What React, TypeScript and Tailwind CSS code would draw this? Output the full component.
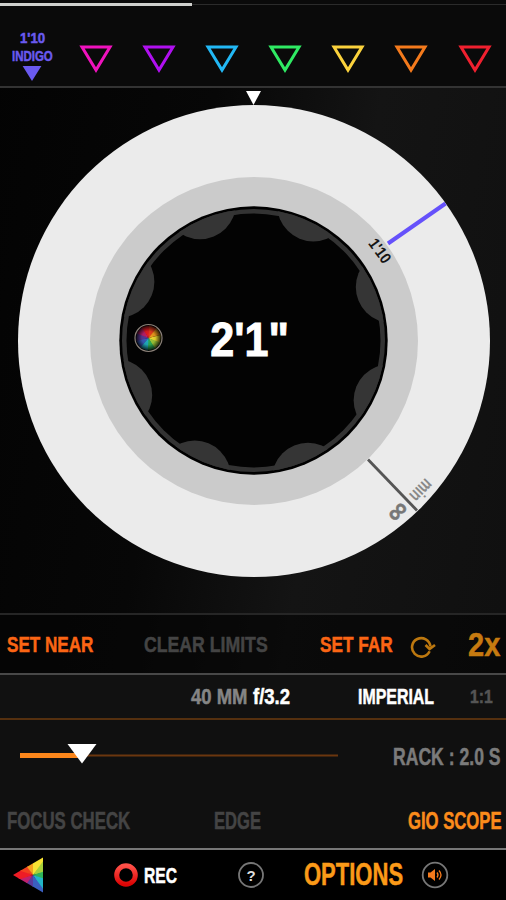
import type { ReactNode } from "react";

type LabelProps = {
    box: string;
    text: string;
    children: ReactNode;
};

const markers = ["#f012be", "#b010f0", "#22b8f5", "#2fea63", "#fbd23c", "#f47a1c", "#f0202f"];

const scallops = [23.6, 68.6, 113.6, 158.6, 203.6, 248.6, 293.6, 338.6];

const wheel = ["#f7e233", "#a5cf3a", "#2fb45a", "#22b5c8", "#3a5fc0", "#5a3a9c", "#c0206e", "#ee1c25", "#f2401f", "#f7a01f"];

function polar(cx: number, cy: number, r: number, deg: number): string {
    const a = (deg * Math.PI) / 180;
    return `${cx + r * Math.sin(a)} ${cy - r * Math.cos(a)}`;
}

// Condensed label: the box keeps the layout width, the text is squeezed into it.
function Label({ box, text, children }: LabelProps) {
    return (
        <span className={`block shrink-0 whitespace-nowrap ${box}`}>
            <span className={`inline-block origin-left font-bold [-webkit-text-stroke:0.5px] ${text}`}>{children}</span>
        </span>
    );
}

function ColorWheel({ cx, cy, r, turn = 0 }: { cx: number; cy: number; r: number; turn?: number }) {
    return (
        <>
            {wheel.map((color, i) => (
                <path
                    key={color}
                    d={`M${cx} ${cy}L${polar(cx, cy, r, turn + i * 36)}L${polar(cx, cy, r, turn + i * 36 + (i === 9 ? 36 : 42))}Z`}
                    fill={color}
                />
            ))}
        </>
    );
}

function MarkerBar() {
    return (
        <header className="h-[88px] border-b-2 border-[#333] bg-[#0a0a0a]">
            <div className="flex h-[29px] items-start pt-[3px]">
                <div className="h-[3px] w-[192px] bg-[#cfd0cd]" />
                <div className="mt-px h-px flex-1 bg-[#2b2b2b]" />
            </div>
            <div className="flex">
                <div className="flex w-[64px] shrink-0 flex-col items-start text-[#6a5af0]">
                    <Label box="ml-[20px] h-[18px] w-[28px] leading-[18px]" text="scale-x-[0.88] text-[15px]">1'10</Label>
                    <Label box="ml-[12px] h-[19px] w-[42px] leading-[18px]" text="scale-x-[0.74] text-[15.5px]">INDIGO</Label>
                    <svg className="ml-[22px] block" width="20" height="16">
                        <path d="M0 -1H20L10 15Z" fill="#6a5af0" />
                    </svg>
                </div>
                <div className="flex pt-[16px] pl-[14.5px]">
                    {markers.map((color) => (
                        <svg key={color} className="mr-[29.2px] block shrink-0" width="34" height="28">
                            <path d="M3 2H31L17 25Z" fill="none" stroke={color} strokeWidth="3" />
                        </svg>
                    ))}
                </div>
            </div>
        </header>
    );
}

function FocusDial() {
    return (
        <svg className="block" width="506" height="525" viewBox="0 88 506 525" fontFamily="Liberation Sans, Arial, sans-serif">
            <defs>
                <clipPath id="knob">
                    <circle cx="253.5" cy="340.5" r="131.5" />
                </clipPath>
                <radialGradient id="orb">
                    <stop offset="0" stopColor="#000" stopOpacity="0" />
                    <stop offset="0.5" stopColor="#000" stopOpacity="0.12" />
                    <stop offset="1" stopColor="#000" stopOpacity="0.95" />
                </radialGradient>
            </defs>
            <path d="M246 91H261L253.5 105Z" fill="#fff" />
            <circle cx="254" cy="341" r="236" fill="#ebebeb" />
            <circle cx="254" cy="341" r="164" fill="#cbcbcb" />
            <circle cx="253.5" cy="340.5" r="134.2" fill="#000" />
            <circle cx="253.5" cy="340.5" r="131.5" fill="#333" />
            <circle cx="253.5" cy="340.5" r="127" fill="#030303" />
            <g clipPath="url(#knob)" fill="#353535">
                {scallops.map((deg) => {
                    const [x, y] = polar(254, 341, 148, deg).split(" ");
                    return <circle key={deg} cx={x} cy={y} r="36" />;
                })}
            </g>
            <ColorWheel cx={148.5} cy={338} r={13} turn={75} />
            <circle cx="148.5" cy="338" r="13.5" fill="url(#orb)" stroke="#8b8078" strokeWidth="1.2" />
            <line x1="388" y1="243.5" x2="445.5" y2="203.5" stroke="#6551fb" strokeWidth="4" />
            <line x1="368" y1="459.5" x2="417" y2="510.5" stroke="#555" strokeWidth="2.8" />
            <text transform="translate(375.5 254) rotate(54) scale(.86 1)" textAnchor="middle" fontSize="16" fontWeight="bold" fill="#151515">1'10</text>
            <text transform="translate(417 486) rotate(135) scale(.72 1)" textAnchor="middle" fontSize="19" fontWeight="bold" fill="#888">min</text>
            <text transform="translate(403.5 517.5) rotate(-45)" textAnchor="middle" fontSize="28" fontWeight="bold" fill="#777" stroke="#777" strokeWidth=".5">∞</text>
            <text transform="translate(249.5 356) scale(.88 1)" textAnchor="middle" fontSize="49" fontWeight="bold" fill="#fff" stroke="#fff" strokeWidth="1">2'1"</text>
        </svg>
    );
}

function LimitsRow() {
    return (
        <div className="flex h-[60px] items-center border-t-2 border-[#262626] bg-[#060606]/70 pl-[6.5px] text-[22.8px] text-[#fb6514]">
            <Label box="w-[137px]" text="scale-x-[0.75]">SET NEAR</Label>
            <Label box="w-[176px] text-[#444]" text="scale-x-[0.775]">CLEAR LIMITS</Label>
            <Label box="w-[90px]" text="scale-x-[0.755]">SET FAR</Label>
            <svg className="mt-[5px] block shrink-0" width="28" height="26" fill="none" stroke="#bd780f" strokeWidth="2.6">
                <path d="M19.6 17.2A9.2 9.2 0 1 1 20.4 12.5M15.5 11L19.6 15L25 11" />
            </svg>
            <Label box="ml-[30px] pt-[2px] text-[33px] text-[#c67a10]" text="scale-x-[0.88]">2x</Label>
        </div>
    );
}

function LensRow() {
    return (
        <div className="flex h-[47px] items-center border-t-2 border-b-2 border-t-[#484848] border-b-[#55300f] bg-[#111] pt-px pl-[190.5px] text-[21.5px] text-white">
            <Label box="w-[62px] text-[#858585]" text="scale-x-[0.86]">40 MM</Label>
            <Label box="w-[105.5px]" text="scale-x-[0.86]">f/3.2</Label>
            <Label box="w-[112px]" text="scale-x-[0.74]">IMPERIAL</Label>
            <Label box="text-[18.5px] text-[#555]" text="scale-x-[0.85]">1:1</Label>
        </div>
    );
}

function RackPanel() {
    return (
        <div className="h-[130px] border-b-2 border-[#777] bg-[#101010] text-[23px]">
            <div className="flex h-[76px] items-center pl-[20px]">
                <svg className="mb-[6px] block shrink-0" width="318" height="24">
                    <path d="M0 12.5H318" stroke="#6b360e" strokeWidth="2" />
                    <path d="M0 12.5H62" stroke="#fb861b" strokeWidth="5" />
                    <path d="M47.5 1H76.5L62 20.5Z" fill="#fff" />
                </svg>
                <Label box="mb-[2px] ml-[55px] text-[#7b7b7b]" text="scale-x-[0.765]">RACK : 2.0 S</Label>
            </div>
            <div className="flex h-[51px] items-center pl-[6.5px] text-[#444]">
                <Label box="w-[207px]" text="scale-x-[0.73]">FOCUS CHECK</Label>
                <Label box="w-[194px]" text="scale-x-[0.72]">EDGE</Label>
                <Label box="text-[#fb8b1b]" text="scale-x-[0.725]">GIO SCOPE</Label>
            </div>
        </div>
    );
}

function BottomBar() {
    return (
        <footer className="flex h-[50px] items-center bg-black pl-[13px]">
            <svg className="block shrink-0" width="30" height="36" viewBox="13 857 30 36">
                <defs>
                    <clipPath id="logo">
                        <path d="M13 875L43 857.5V892.5Z" />
                    </clipPath>
                </defs>
                <g clipPath="url(#logo)">
                    <ColorWheel cx={33} cy={875} r={30} />
                </g>
            </svg>
            <svg className="ml-[70px] block shrink-0" width="26" height="26">
                <defs>
                    <linearGradient id="rec" x1="0" y1="0" x2="0" y2="1">
                        <stop offset="0" stopColor="#ff5048" />
                        <stop offset="1" stopColor="#dc0505" />
                    </linearGradient>
                </defs>
                <circle cx="13" cy="13" r="9.3" fill="none" stroke="url(#rec)" strokeWidth="5" />
            </svg>
            <Label box="ml-[4.5px] w-[93px] text-[22px] text-white" text="scale-x-[0.71]">REC</Label>
            <svg className="block shrink-0" width="28" height="28" fontFamily="Liberation Sans, Arial, sans-serif">
                <circle cx="14" cy="14" r="12" fill="none" stroke="#777" strokeWidth="1.8" />
                <text x="14" y="19.5" textAnchor="middle" fontSize="15" fontWeight="bold" fill="#ddd">?</text>
            </svg>
            <Label box="ml-[39px] w-[117.5px] text-[31px] text-[#fb9a18]" text="scale-x-[0.71]">OPTIONS</Label>
            <svg className="block shrink-0" width="28" height="28">
                <circle cx="14" cy="14" r="12.3" fill="none" stroke="#777" strokeWidth="1.8" />
                <path d="M7 11.5H9.5L14 8V20L9.5 16.5H7Z" fill="#f47a1c" />
                <path d="M16 11.5Q18 14 16 16.5M18 9.5Q22 14 18 18.5" fill="none" stroke="#f47a1c" strokeWidth="1.3" />
            </svg>
        </footer>
    );
}

export default function App() {
    return (
        <main className="h-[900px] w-[506px] overflow-hidden bg-[linear-gradient(100deg,#030303_0%,#070707_35%,#141414_60%,#0f0f0f_100%)] font-['Liberation_Sans',Arial,sans-serif]">
            <MarkerBar />
            <FocusDial />
            <LimitsRow />
            <LensRow />
            <RackPanel />
            <BottomBar />
        </main>
    );
}
